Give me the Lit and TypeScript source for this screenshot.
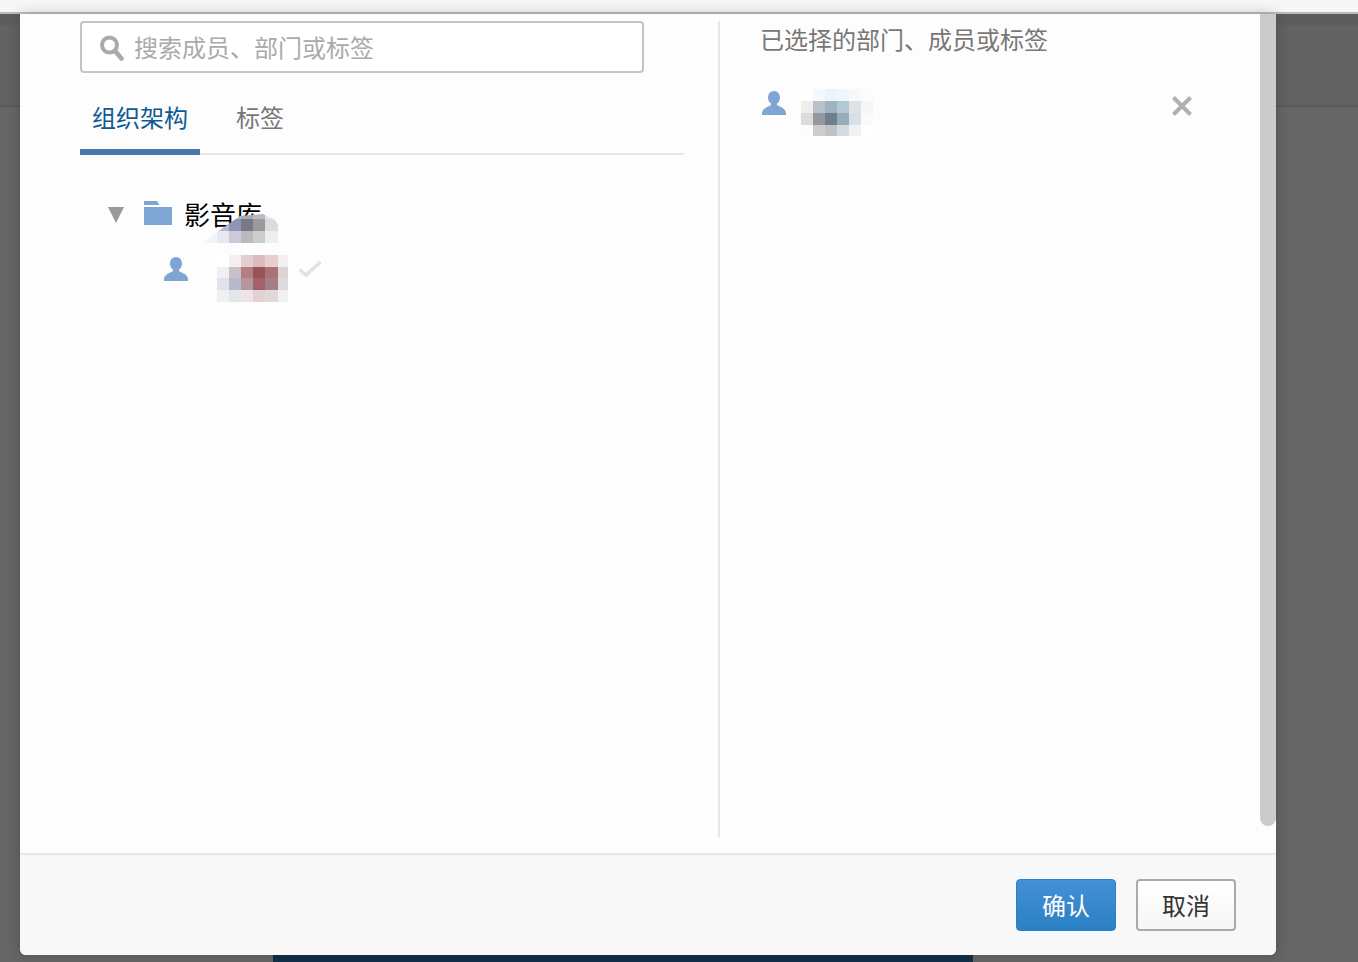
import { LitElement, html, css, svg } from "lit";
import { customElement, property } from "lit/decorators.js";

@customElement("pixel-mosaic")
class PixelMosaic extends LitElement {
  @property({ attribute: false }) cols: number[] = [];
  @property({ attribute: false }) rows: number[] = [];
  @property({ attribute: false }) colors: string[][] = [];
  static styles = css`
    :host { display: block; }
    .grid { display: grid; }
  `;
  render() {
    const st = `grid-template-columns:${this.cols.map((c) => c + "px").join(" ")};grid-template-rows:${this.rows.map((c) => c + "px").join(" ")}`;
    return html`<div class="grid" style=${st}>
      ${this.colors.flat().map((c) => html`<div style="background:${c}"></div>`)}
    </div>`;
  }
}

const personIcon = svg`<path fill="#7ea5d3" d="M12 0c3.3 0 6 2.8 6 6.5 0 2.5-1 4.6-2.6 5.8-.6.5-.6 1.6.2 2.1C18 15.8 24 17 24 22.5V24H0v-1.5c0-5.5 6-6.7 8.4-8.1.8-.5.8-1.6.2-2.1C7 11.1 6 9 6 6.5 6 2.8 8.7 0 12 0z"/>`;

const selectedMosaic = [
  ["#ffffff", "#f5f9fd", "#edf5fb", "#f0f6fa", "#f6f8f9", "#fbfbfc"],
  ["#eeeeee", "#b9c2cb", "#9db4c4", "#b4c8d3", "#dde3e6", "#f5f6f7"],
  ["#dcdcdc", "#94989f", "#6f7f8d", "#97adba", "#d7e0e4", "#fafafa"],
  ["#fcfcfc", "#cdcdcd", "#bfc3c5", "#d6dbe0", "#eff3f6", "#ffffff"],
];
const memberMosaic = [
  ["#ffffff", "#f4eef0", "#e3cfd0", "#dcbcc0", "#e5cfcf", "#f3eeef"],
  ["#eff0f4", "#cbc0ca", "#b27f82", "#9a5356", "#a97376", "#dfd3d6"],
  ["#e0e4ea", "#b7bac8", "#b7959d", "#a3626b", "#a27e85", "#dddbde"],
  ["#eff0f4", "#e2e7ec", "#ece4e8", "#e5d0d5", "#dfd9db", "#f1f1f2"],
];
const overlapMosaic = [
  ["#f2f5f7", "#d4d8e6", "#b4b7cb", "#a9aab3", "#bcbcc0", "#e6e6e8"],
  ["#f2f5f7", "#b6bdd3", "#9095b3", "#787a88", "#9a9a9e", "#dcdcde"],
  ["#f2f5f7", "#e6e9f2", "#cbcbd8", "#b9b9bf", "#cdcdcf", "#eeeeef"],
];

@customElement("app-root")
class AppRoot extends LitElement {
  static styles = css`
    :host {
      display: block;
      position: relative;
      width: 1358px;
      height: 962px;
      overflow: hidden;
      font-family: "Noto Sans CJK SC", "Liberation Sans", sans-serif;
      font-size: 24px;
    }
    .page { display: flex; flex-direction: column; height: 962px; background: #666; }
    .topbar { height: 12px; background: #f7f7f7; border-bottom: 2px solid #bbb; }
    .band-a { height: 11px; background: #5c5e5e; }
    .band-b { height: 80px; background: #626262; border-bottom: 2px solid #5a5a5a; }
    .rest { flex: 1; display: flex; flex-direction: column; justify-content: flex-end; }
    .under-bar { width: 700px; height: 7px; margin-left: 273px; background: #12304a; }

    .modal {
      position: absolute;
      left: 20px;
      top: 14px;
      width: 1256px;
      height: 941px;
      display: flex;
      flex-direction: column;
      background: #fff;
      border-radius: 0 0 6px 6px;
      box-shadow: 0 0 14px rgba(0, 0, 0, 0.22);
      overflow: hidden;
    }
    .body { height: 839px; display: flex; align-items: flex-start; padding-top: 7px; box-sizing: border-box; background: #fdfdfd; }
    .left { width: 604px; margin-left: 60px; }
    .search {
      width: 564px;
      height: 52px;
      box-sizing: border-box;
      display: flex;
      align-items: center;
      padding-left: 18px;
      border: 2px solid #c4c4c4;
      border-radius: 4px;
      background: #fff;
    }
    .search svg { flex: none; margin-top: 2px; }
    .search input {
      flex: 1;
      min-width: 0;
      margin-left: 10px;
      padding: 0 0 2px;
      border: 0;
      outline: 0;
      background: transparent;
      font: inherit;
      color: #555;
    }
    .search input::placeholder { color: #aaa; opacity: 1; }

    .tabs { display: flex; margin-top: 20px; height: 62px; box-sizing: border-box; border-bottom: 2px solid #e6e6e6; }
    .tab { height: 62px; box-sizing: border-box; line-height: 47px; padding: 0 12px; color: #777; }
    .tab.active { width: 120px; color: #0f5a94; border-bottom: 6px solid #4a76ac; }
    .tab + .tab { margin-left: 24px; }

    .tree { padding-top: 45px; }
    .org-row { position: relative; height: 30px; display: flex; align-items: center; padding-left: 28px; color: #000; }
    .folder { margin-left: 20px; margin-top: -4px; flex: none; }
    .org-name { margin-left: 12px; margin-bottom: 2px; font-size: 26px; line-height: 30px; white-space: nowrap; }
    .overlap {
      position: absolute;
      left: 123px;
      top: 14px;
      clip-path: polygon(0 29px, 14px 18px, 27px 9px, 37px 2px, 60px 0, 72px 6px, 75px 11px, 75px 29px);
    }
    .member-row { display: flex; align-items: flex-start; margin-top: 25px; padding-left: 84px; }
    .member-row .person { margin-top: 2px; flex: none; }
    .member-row pixel-mosaic { margin-left: 29px; }
    .member-row .check { margin-left: 10px; margin-top: 5px; flex: none; }

    .divider { width: 2px; height: 816px; margin-left: 34px; background: #e6e6e6; flex: none; }
    .right { margin-left: 40px; width: 432px; }
    .right h2 { margin: 0; font-weight: 400; font-size: 24px; line-height: 36px; color: #777; }
    .sel-row { display: flex; align-items: flex-start; margin-top: 31px; padding-left: 2px; }
    .sel-row .person { margin-top: 3px; flex: none; }
    .sel-row pixel-mosaic { margin-left: 15px; margin-top: 1px; }
    .sel-row .remove { margin-left: auto; margin-top: 8px; flex: none; }

    .scrollbar {
      position: absolute;
      right: 0;
      top: 0;
      width: 16px;
      height: 812px;
      background: #cbcbcb;
      border-radius: 0 0 8px 8px;
    }

    .footer {
      height: 102px;
      box-sizing: border-box;
      border-top: 2px solid #e6e6ec;
      background: #f8f8f8;
      display: flex;
      justify-content: flex-end;
      align-items: flex-start;
      gap: 20px;
      padding: 24px 40px 0 0;
    }
    .btn {
      width: 100px;
      height: 52px;
      box-sizing: border-box;
      border-radius: 4px;
      font: inherit;
      padding: 0 0 2px;
    }
    .btn.primary {
      border: 1px solid #2a80c4;
      background: linear-gradient(#4590d6, #2a80c2);
      color: #fff;
    }
    .btn.plain {
      border: 2px solid #aaa;
      background: linear-gradient(#fff, #f6f6f6);
      color: #333;
    }
  `;

  render() {
    return html`
      <div class="page">
        <div class="topbar"></div>
        <div class="band-a"></div>
        <div class="band-b"></div>
        <div class="rest"><div class="under-bar"></div></div>
      </div>
      <div class="modal">
        <div class="body">
          <div class="left">
            <div class="search">
              <svg width="24" height="26" viewBox="0 0 24 26">
                <circle cx="9.5" cy="10" r="7.5" fill="none" stroke="#aaa" stroke-width="4"/>
                <path d="M15.5 16.5 21.5 23.5" stroke="#aaa" stroke-width="4.6" stroke-linecap="round"/>
              </svg>
              <input type="text" placeholder="搜索成员、部门或标签" />
            </div>
            <div class="tabs">
              <div class="tab active">组织架构</div>
              <div class="tab">标签</div>
            </div>
            <div class="tree">
              <div class="org-row">
                <svg width="16" height="16" viewBox="0 0 16 16"><path fill="#999" d="M0 0h16L8 16z"/></svg>
                <svg class="folder" width="28" height="24" viewBox="0 0 28 24">
                  <path fill="#7ea5d3" d="M0 0h13l2.5 4H0zM0 6h28v18H0z"/>
                </svg>
                <span class="org-name">影音库</span>
                <pixel-mosaic class="overlap" .cols=${[14, 12, 12, 12, 12, 13]} .rows=${[5, 12, 12]} .colors=${overlapMosaic}></pixel-mosaic>
              </div>
              <div class="member-row">
                <svg class="person" width="24" height="24" viewBox="0 0 24 24">${personIcon}</svg>
                <pixel-mosaic .cols=${[12, 12, 12, 12, 13, 10]} .rows=${[12, 11, 12, 12]} .colors=${memberMosaic}></pixel-mosaic>
                <svg class="check" width="24" height="17" viewBox="0 0 24 17">
                  <path d="M1.5 9.5 8 15 22.5 2" fill="none" stroke="#e2e2e2" stroke-width="3.6"/>
                </svg>
              </div>
            </div>
          </div>
          <div class="divider"></div>
          <div class="right">
            <h2>已选择的部门、成员或标签</h2>
            <div class="sel-row">
              <svg class="person" width="24" height="24" viewBox="0 0 24 24">${personIcon}</svg>
              <pixel-mosaic .cols=${[12, 12, 12, 12, 12, 12]} .rows=${[12, 12, 12, 11]} .colors=${selectedMosaic}></pixel-mosaic>
              <svg class="remove" width="20" height="20" viewBox="0 0 20 20">
                <path d="M1.5 1.5 18.5 18.5M18.5 1.5 1.5 18.5" stroke="#b0b0b0" stroke-width="4" fill="none"/>
              </svg>
            </div>
          </div>
        </div>
        <div class="footer">
          <button class="btn primary">确认</button>
          <button class="btn plain">取消</button>
        </div>
        <div class="scrollbar"></div>
      </div>
    `;
  }
}
